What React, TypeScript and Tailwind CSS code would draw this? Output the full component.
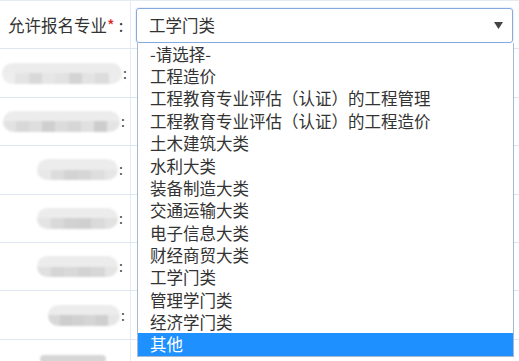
const options = [
  "-请选择-",
  "工程造价",
  "工程教育专业评估（认证）的工程管理",
  "工程教育专业评估（认证）的工程造价",
  "土木建筑大类",
  "水利大类",
  "装备制造大类",
  "交通运输大类",
  "电子信息大类",
  "财经商贸大类",
  "工学门类",
  "管理学门类",
  "经济学门类",
  "其他",
];

// blurred (mosaic) labels of the hidden rows
const rows = [
  { left: 2, width: 120, shades: ["#eee", "#e4e4e4", "#d9d9d9", "#e6e6e6", "#e2e2e2", "#d4d4d4", "#e3e3e3", "#dcdcdc", "#ececec"] },
  { left: 3, width: 117, shades: ["#e2e2e2", "#d8d8d8", "#dedede", "#cfcfcf", "#dcdcdc", "#d6d6d6", "#e0e0e0", "#cdcdcd", "#e4e4e4"] },
  { left: 37, width: 81, shades: ["#e8e8e8", "#dcdcdc", "#d3d3d3", "#d6d6d6", "#dedede", "#e6e6e6"] },
  { left: 37, width: 81, shades: ["#e4e4e4", "#d9d9d9", "#d2d2d2", "#d0d0d0", "#dadada", "#e2e2e2"] },
  { left: 37, width: 81, shades: ["#e0e0e0", "#d5d5d5", "#d9d9d9", "#d3d3d3", "#d7d7d7", "#e4e4e4"] },
  { left: 48, width: 72, shades: ["#d8d8d8", "#cdcdcd", "#d1d1d1", "#d5d5d5", "#cfcfcf", "#e6e6e6"] },
];

function Mosaic({ left, width, shades }: { left: number; width: number; shades: string[] }) {
  return (
    <div className="flex h-full items-center">
      <div style={{ width: left }} className="shrink-0" />
      <div style={{ width }} className="flex h-[21px] overflow-hidden rounded-full blur-[1px]">
        {shades.map((c, i) => (
          <div key={i} className="flex flex-1 flex-col">
            <div className="h-1/2 bg-[#ececec]" />
            <div className="h-1/2" style={{ backgroundColor: c }} />
          </div>
        ))}
      </div>
      <span className="ml-[1px] text-[14px] text-[#444]">:</span>
    </div>
  );
}

export default function App() {
  return (
    <div className="relative h-[361px] w-[519px] overflow-hidden bg-white font-['Noto_Sans_CJK_SC','Microsoft_YaHei',sans-serif] text-[16.5px] text-[#333]">
      <div className="flex flex-col border-t border-[#e3ebf3]">
        <div className="flex h-[48.4px] border-b border-[#dde7f1]">
          <div className="flex w-[131px] shrink-0 items-center whitespace-nowrap border-r border-[#e3ebf3] pl-[8px] pt-[1px]">
            允许报名专业<span className="text-[#e02020]">*</span>
            <span className="ml-[4px]">:</span>
          </div>
          <div className="pl-[5px] pt-[7px]">
            <div className="flex h-[35px] w-[377px] items-center justify-between rounded-[3px] border border-[#86a9e0] pl-[12px] pr-[9px] shadow-[0_0_2px_#b8cff0]">
              <span>工学门类</span>
              <svg width="9" height="7" viewBox="0 0 9 7">
                <path d="M0 0H9L4.5 7Z" fill="#444" />
              </svg>
            </div>
          </div>
        </div>
        {rows.map((r, i) => (
          <div key={i} className="flex h-[48.4px] border-b border-[#dde7f1]">
            <div className="w-[131px] shrink-0 border-r border-[#e3ebf3]">
              <Mosaic {...r} />
            </div>
          </div>
        ))}
        <div className="flex h-[48px]">
          <div className="w-[131px] shrink-0 border-r border-[#e3ebf3] pl-[40px] pt-[15px]">
            <div className="h-[8px] w-[66px] rounded-full bg-[#d6d6d6] blur-[1px]" />
          </div>
        </div>
      </div>

      <div className="absolute left-[137px] top-[43px] w-[377px] border border-t-0 border-[#a6b9d4] bg-white">
        {options.map((o) => (
          <div
            key={o}
            className={
              o === "其他"
                ? "flex h-[22.35px] items-center bg-[#1e90ff] pl-[12px] text-white"
                : "flex h-[22.35px] items-center pl-[12px]"
            }
          >
            {o}
          </div>
        ))}
      </div>
    </div>
  );
}
